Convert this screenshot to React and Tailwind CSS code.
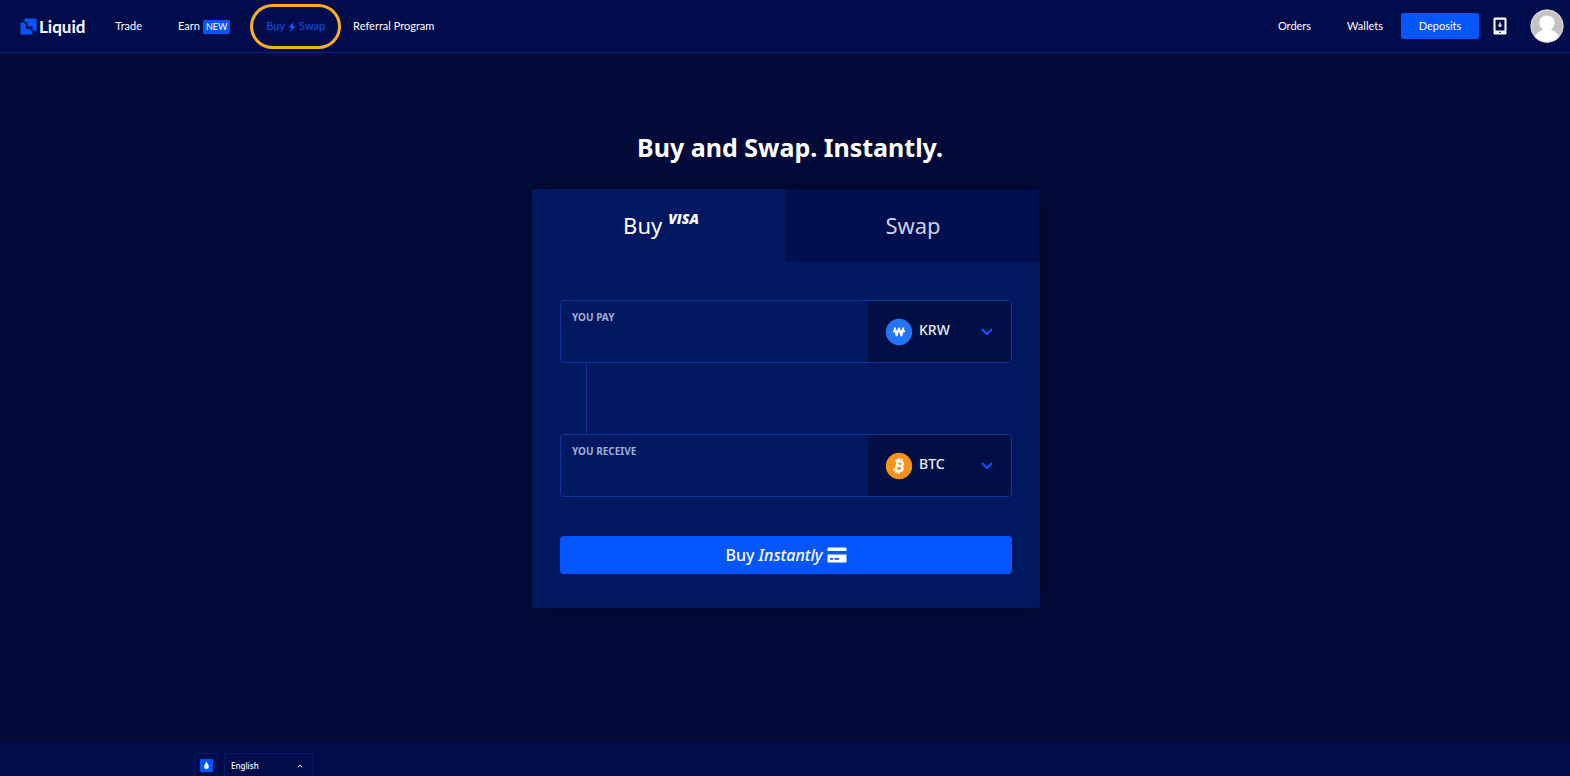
import React from "react";

const textFont = "font-['Noto_Sans','Open_Sans',sans-serif]";

function Logo() {
  return (
    <a href="#home" className="flex items-center gap-0.5 text-white">
      <svg width="17" height="17" viewBox="0 0 17 17" aria-hidden="true">
        <path d="M4.5 0.5H16.5V12.5H12.5V16.5H0.5V4.5H4.5Z" fill="#0556ff" />
        <path d="M4.5 4H7.500V8.500H12.500V12.500H10.500V10.800H5.800V6H4.500Z" fill="#010a47" />
      </svg>
      <span className="font-['Lato',sans-serif] text-[17px] leading-5 font-bold">Liquid</span>
    </a>
  );
}

function Bolt() {
  return (
    <svg width="8" height="10" viewBox="0 0 8 10" aria-hidden="true">
      <path d="M5.8 0L0.3 5.6H3.2L1.6 10L7.8 4.1H4.6Z" fill="#0a5cff" />
    </svg>
  );
}

function DeviceIcon() {
  return (
    <svg width="14" height="18" viewBox="0 0 14 18" aria-hidden="true">
      <path
        fillRule="evenodd"
        fill="#fff"
        d="M2 0.5H12A1.5 1.5 0 0 1 13.5 2V16A1.5 1.5 0 0 1 12 17.5H2A1.5 1.5 0 0 1 0.5 16V2A1.5 1.5 0 0 1 2 0.5ZM2.5 2.8V13.5H11.5V2.8ZM6.2 14.7V16H7.8V14.7Z"
      />
      <path d="M6.4 5.2H7.6V7.8H9.4L7 10.6L4.6 7.8H6.4Z" fill="#fff" />
    </svg>
  );
}

function Avatar() {
  return (
    <svg width="34" height="34" viewBox="0 0 34 34" aria-hidden="true">
      <clipPath id="avatar-clip">
        <circle cx="17" cy="17" r="16.5" />
      </clipPath>
      <g clipPath="url(#avatar-clip)">
        <rect width="34" height="34" fill="#c4c4c4" />
        <path
          fill="#fff"
          d="M17 6.500C21.400 6.500 24.600 9.600 24.600 13.600C24.600 16.400 23.200 18.600 21.300 20V21C25.500 22.300 29 25.400 30 30V34H4V30C5 25.400 8.500 22.300 12.700 21V20C10.800 18.600 9.400 16.400 9.400 13.600C9.400 9.600 12.600 6.500 17 6.500Z"
        />
      </g>
      <circle cx="17" cy="17" r="16" fill="none" stroke="#dcdcdc" />
    </svg>
  );
}

function WonIcon() {
  return (
    <svg width="28" height="28" viewBox="0 0 28 28" aria-hidden="true">
      <circle cx="14" cy="14" r="13.200" fill="#2376fb" />
      <path
        d="M9.500 9.600L11.600 17.400L14 10.500L16.400 17.400L18.500 9.600M8 13.200H20"
        fill="none"
        stroke="#fff"
        strokeWidth="2"
        strokeLinejoin="round"
      />
    </svg>
  );
}

function BitcoinIcon() {
  return (
    <svg width="28" height="28" viewBox="0 0 28 28" aria-hidden="true">
      <circle cx="14" cy="14" r="13.200" fill="#f7931a" />
      <g transform="rotate(13 14 14)" fill="none" stroke="#fff" strokeWidth="2.200">
        <path d="M9 9.300H14.600C18.400 9.300 18.400 13.700 14.600 13.700H11.600M14.600 13.700C19.400 13.700 19.400 18.700 14.600 18.700H9M11.600 9.300V18.700" />
        <path d="M12.400 6.200V9.300M15.300 6.200V9.300M12.400 18.700V21.800M15.300 18.700V21.800" strokeWidth="1.700" />
      </g>
    </svg>
  );
}

function CardIcon() {
  return (
    <svg width="20" height="16" viewBox="0 0 20 16" aria-hidden="true">
      <path
        fillRule="evenodd"
        fill="#fff"
        d="M1.500 0.500H18.500A1 1 0 0 1 19.500 1.500V4H0.500V1.500A1 1 0 0 1 1.500 0.500ZM0.500 7.500H19.500V14.500A1 1 0 0 1 18.500 15.500H1.500A1 1 0 0 1 0.500 14.500ZM3 11V12.800H6V11ZM7.500 11V12.800H12V11Z"
      />
    </svg>
  );
}

function Field({ id, label, currency, others, icon }) {
  return (
    <div className="flex h-[63px] overflow-hidden rounded border border-[#12359a] bg-[#001761]">
      <div className="flex min-w-0 flex-1 flex-col px-[11px] pt-2">
        <label htmlFor={id} className="text-[10px] leading-4 font-bold text-[#a0aed8]">
          {label}
        </label>
        <input
          id={id}
          type="text"
          inputMode="decimal"
          className="w-full flex-1 bg-transparent text-base text-white outline-none"
        />
      </div>
      <div className="grid w-[143px] grid-cols-1 items-center bg-[#001045]">
        <select
          aria-label={`${label} currency`}
          defaultValue={currency}
          className="col-start-1 row-start-1 h-full w-full appearance-none bg-transparent pb-1 pl-[51px] text-[14px] font-medium text-[#e9ecf7] outline-none"
        >
          <option>{currency}</option>
          {others.map((c) => (
            <option key={c}>{c}</option>
          ))}
        </select>
        <div className="pointer-events-none col-start-1 row-start-1 flex items-center justify-between pr-4 pl-[17px]">
          {icon}
          <svg width="16" height="10" viewBox="0 0 16 10" aria-hidden="true">
            <path d="M3 2L8 7L13 2" fill="none" stroke="#0a56ff" strokeWidth="2" />
          </svg>
        </div>
      </div>
    </div>
  );
}

export default function App() {
  return (
    <div className={`flex min-h-screen flex-col bg-[#020a39] text-white ${textFont}`}>
      <header className="flex h-[53px] items-center justify-between border-b border-[#02217a] bg-[#010c4c] pr-[6px] pl-5 font-['Lato',sans-serif] text-[11px]">
        <nav className="flex items-center pt-px" aria-label="Main">
          <Logo />
          <a href="#trade" className="ml-[30px]">Trade</a>
          <a href="#earn" className="ml-9 flex items-center gap-[3px]">
            Earn
            <span className="rounded-xs bg-[#0556ff] px-[3px] text-[9px] leading-[14px]">NEW</span>
          </a>
          <a href="#swap" className="relative ml-9 flex items-center gap-[3px] text-[#0a50ec]">
            Buy <Bolt /> Swap
            <span className="pointer-events-none absolute -inset-x-4 -inset-y-3.5 rounded-full border-3 border-[#fbae22]" />
          </a>
          <a href="#referral" className="ml-7">Referral Program</a>
        </nav>
        <div className="flex items-center">
          <a href="#orders">Orders</a>
          <a href="#wallets" className="ml-9">Wallets</a>
          <button type="button" className="ml-[18px] h-[26px] w-[78px] rounded-xs bg-[#0556ff]">
            Deposits
          </button>
          <button type="button" aria-label="Get the mobile app" className="ml-[14px]">
            <DeviceIcon />
          </button>
          <span className="ml-4 h-3 w-px bg-[#021a66]" />
          <button type="button" aria-label="Account" className="ml-[6px]">
            <Avatar />
          </button>
        </div>
      </header>

      <main className="flex flex-1 flex-col items-center pt-[74px] pr-4 pl-[18px]">
        <h1 className="ml-2 text-[25px] leading-10 font-bold">Buy and Swap. Instantly.</h1>
        <section className="mt-[22px] w-full max-w-[508px] rounded-xs bg-[#001761] shadow-[0_0_16px_rgba(0,0,20,0.6)]">
          <div className="grid grid-cols-2 text-[22px]" role="tablist">
            <button type="button" role="tab" aria-selected="true" className="flex h-[73px] items-center justify-center gap-[6px] pl-1">
              Buy
              <span className="pb-3.5 font-['Open_Sans',sans-serif] text-[14px] leading-4 font-extrabold italic">VISA</span>
            </button>
            <button type="button" role="tab" aria-selected="false" className="h-[73px] bg-[#000e4e] text-[#ccd1e6]">
              Swap
            </button>
          </div>
          <form className="px-7 pt-[38px] pb-[34px]">
            <Field id="pay" label="YOU PAY" currency="KRW" others={["USD", "JPY"]} icon={<WonIcon />} />
            <div className="ml-[26px] h-[71px] w-px bg-[#12359a]" />
            <Field id="receive" label="YOU RECEIVE" currency="BTC" others={["ETH", "XRP"]} icon={<BitcoinIcon />} />
            <button
              type="button"
              className="mt-[39px] flex h-[38px] w-full items-center justify-center gap-1 rounded bg-[#0556ff] text-[16px] font-medium"
            >
              <span>
                Buy <em>Instantly</em>
              </span>
              <CardIcon />
            </button>
          </form>
        </section>
      </main>

      <footer className="flex h-[33px] items-start gap-[6px] overflow-hidden bg-[#010c4a] pt-[10px] pl-[194px]">
        <button
          type="button"
          aria-label="Liquid theme"
          className="flex h-[25px] w-6 items-center justify-center rounded-xs border border-[#021c68]"
        >
          <svg width="13" height="13" viewBox="0 0 13 13" aria-hidden="true">
            <rect width="13" height="13" rx="1" fill="#0556ff" />
            <path d="M6.500 2.500C7.300 4.500 8.800 5.800 8.800 7.700A2.300 2.300 0 0 1 4.200 7.700C4.200 5.800 5.700 4.500 6.500 2.500Z" fill="#fff" />
          </svg>
        </button>
        <div className="grid w-[89px] grid-cols-1 items-center rounded-xs border border-[#021c68]">
          <select
            aria-label="Language"
            defaultValue="English"
            className="col-start-1 row-start-1 h-[23px] w-full appearance-none bg-transparent pl-[6px] text-[8px] font-medium outline-none"
          >
            <option>English</option>
            <option>日本語</option>
          </select>
          <svg
            className="pointer-events-none col-start-1 row-start-1 mr-2 justify-self-end"
            width="8"
            height="6"
            viewBox="0 0 8 6"
            aria-hidden="true"
          >
            <path d="M1.800 4.300L4 2.200L6.200 4.300" fill="none" stroke="#fff" />
          </svg>
        </div>
      </footer>
    </div>
  );
}
